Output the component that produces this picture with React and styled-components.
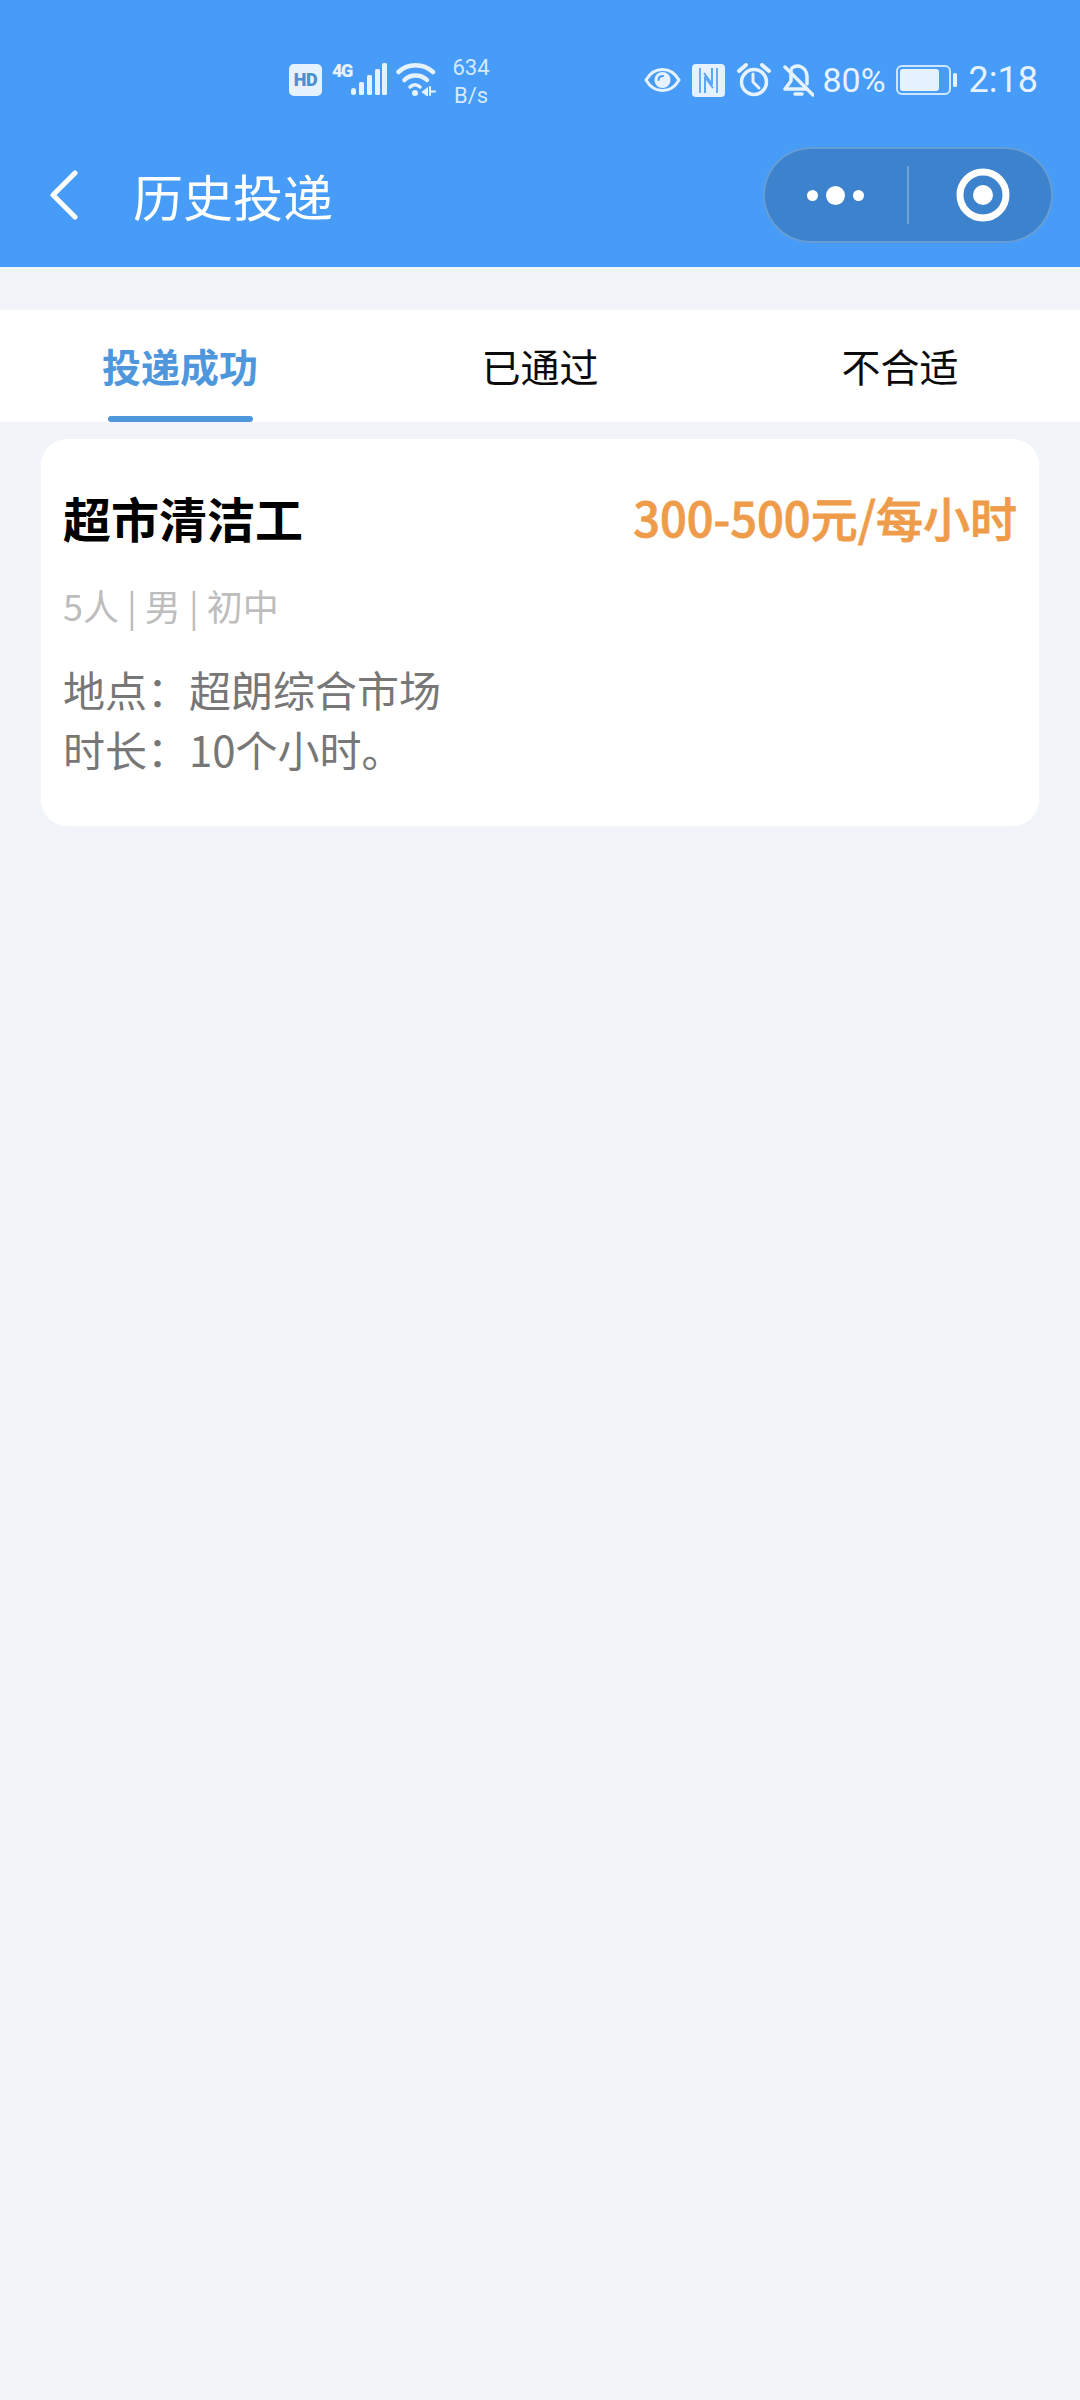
import React from "react";
import styled, { createGlobalStyle } from "styled-components";

const Global = createGlobalStyle`
  html, body { margin: 0; padding: 0; background: #f1f4f9; }
  * { box-sizing: border-box; }
`;
const CJK = `"Noto Sans CJK SC", "Noto Sans", sans-serif`;

const Page = styled.div`
  width: 1080px;
  min-height: 2400px;
  background: #f1f4f9;
  font-family: ${CJK};
`;
const Header = styled.header`
  height: 267px;
  background: #479cf8;
  display: flex;
  flex-direction: column;
`;
const StatusBar = styled.div`
  height: 147px;
  padding: 62px 42px 0 289px;
  display: flex;
  align-items: flex-start;
  color: #e6f2ff;
  font-family: Roboto, sans-serif;
`;
const HdBadge = styled.span`
  width: 33px;
  height: 32px;
  margin-top: 2px;
  border-radius: 5px;
  background: #e6f2ff;
  color: #4f8fd0;
  font-size: 18px;
  font-weight: 900;
  line-height: 32px;
  text-align: center;
  letter-spacing: -0.5px;
`;
const NetTag = styled.span`
  width: 19px;
  margin-left: 10px;
  margin-top: 0;
  font-size: 18px;
  font-weight: 900;
  line-height: 18px;
  letter-spacing: -1.5px;
`;
const Speed = styled.span`
  margin-left: 14px;
  margin-top: -8px;
  width: 42px;
  font-size: 22px;
  line-height: 28px;
  text-align: center;
  color: #d5e9ff;
`;
const StatusRight = styled.div`
  margin-left: auto;
  display: flex;
  align-items: center;
  height: 36px;
`;
const Glyph = styled.svg`
  display: block;
  flex: none;
  margin-left: ${(p) => p.$gap || 0}px;
  margin-top: ${(p) => p.$top || 0}px;
`;
const Pct = styled.span`
  margin-left: 8px;
  font-size: 34px;
  line-height: 36px;
`;
const Clock = styled.span`
  margin-left: 11px;
  font-size: 36px;
  line-height: 36px;
`;
const NavBar = styled.div`
  flex: 1;
  display: flex;
  align-items: center;
  padding: 0 27px 24px 50px;
`;
const NavTitle = styled.h1`
  margin: 0 0 0 55px;
  font-size: 50px;
  font-weight: 400;
  line-height: 72px;
  color: #fff;
`;
const Capsule = styled.div`
  margin-left: auto;
  width: 290px;
  height: 96px;
  border-radius: 48px;
  background: #3c82cc;
  border: 2px solid rgba(255, 255, 255, 0.22);
  display: flex;
  align-items: center;
`;
const CapsuleSide = styled.div`
  width: 143px;
  height: 100%;
  display: flex;
  align-items: center;
  justify-content: center;
  gap: 8px;
  padding-left: ${(p) => p.$pad || 0}px;
`;
const Dot = styled.span`
  width: ${(p) => p.$size}px;
  height: ${(p) => p.$size}px;
  border-radius: 50%;
  background: #fff;
`;
const Divider = styled.span`
  width: 2px;
  height: 58px;
  background: rgba(255, 255, 255, 0.25);
`;
const Tabs = styled.nav`
  margin-top: 43px;
  height: 112px;
  background: #fff;
  display: grid;
  grid-template-columns: repeat(3, 1fr);
`;
const Tab = styled.div`
  position: relative;
  display: flex;
  align-items: center;
  justify-content: center;
  padding-bottom: 2px;
  font-size: 39px;
  line-height: 58px;
  font-weight: ${(p) => (p.$active ? 700 : 400)};
  color: ${(p) => (p.$active ? "#4f97dd" : "#0a0a0a")};
  &::after {
    content: "";
    display: ${(p) => (p.$active ? "block" : "none")};
    position: absolute;
    left: 108px;
    bottom: 0;
    width: 145px;
    height: 6px;
    border-radius: 3px;
    background: #4f97dd;
  }
`;
const Card = styled.article`
  margin: 17px 41px 0;
  height: 387px;
  padding: 43px 22px 0;
  background: #fff;
  border-radius: 26px;
`;
const CardTop = styled.div`
  display: flex;
  justify-content: space-between;
  align-items: center;
  height: 70px;
`;
const JobTitle = styled.h2`
  margin: 0;
  font-size: 48px;
  font-weight: 700;
  line-height: 70px;
  color: #000;
`;
const Salary = styled.span`
  font-size: 47px;
  font-weight: 500;
  line-height: 70px;
  color: #ef9c4a;
  -webkit-text-stroke: 0.8px #ef9c4a;
`;
const Meta = styled.div`
  margin-top: 27px;
  font-size: 36px;
  line-height: 52px;
  color: #bdbdbd;
`;
const Info = styled.div`
  margin-top: 28px;
  font-size: 42px;
  line-height: 60px;
  color: #777;
`;

const Signal = () => (
  <Glyph width="36" height="34" viewBox="0 0 36 34">
    <rect x="0" y="26" width="5" height="7" rx="2.5" fill="#e6f2ff" />
    <rect x="8" y="20" width="5" height="13" rx="1.5" fill="#e6f2ff" />
    <rect x="16" y="13" width="5" height="20" rx="1.5" fill="#e6f2ff" />
    <rect x="24" y="7" width="5" height="26" rx="1.5" fill="#e6f2ff" />
    <rect x="31" y="1" width="5" height="32" rx="1.5" fill="#e6f2ff" />
  </Glyph>
);
const Wifi = () => (
  <Glyph width="40" height="34" viewBox="0 0 40 34" $gap={9} fill="none" stroke="#e6f2ff" strokeWidth="4.5" strokeLinecap="round">
    <path d="M2.5 10 C12 1 27 1 37 10" />
    <path d="M8.5 18 C14 12 25 12 31 18" />
    <path d="M14 25 C17 22 21 22 24 25" strokeWidth="3.5" />
    <circle cx="19" cy="31" r="3" fill="#e6f2ff" stroke="none" />
    <path d="M27 30 L31 27 V33 Z M34 25 V33 M34 29.5 L39 29.5" strokeWidth="2" fill="#e6f2ff" />
  </Glyph>
);
const Eye = () => (
  <Glyph width="37" height="26" viewBox="0 0 37 26" fill="none" stroke="#e6f2ff">
    <path d="M2 13 C10 -1 27 -1 35 13 C27 27 10 27 2 13 Z" strokeWidth="3" />
    <circle cx="18.5" cy="13" r="8" fill="#e6f2ff" stroke="none" />
    <path d="M14.5 13 C14.5 10.5 16.5 9 19 9" stroke="#479cf8" strokeWidth="2" strokeLinecap="round" />
  </Glyph>
);
const Nfc = () => (
  <Glyph width="33" height="33" viewBox="0 0 33 33" $gap={11} fill="none">
    <rect width="33" height="33" rx="4" fill="#e6f2ff" />
    <path d="M8 4 V29 M25 4 V29" stroke="#5ba6f7" strokeWidth="1.8" />
    <path d="M13 29 V13 L21 24 M20 4 V20 L12 9" stroke="#5ba6f7" strokeWidth="2" strokeLinejoin="round" />
  </Glyph>
);
const Alarm = () => (
  <Glyph width="34" height="34" viewBox="0 0 34 34" $gap={12} fill="none" stroke="#e6f2ff" strokeWidth="3.5" strokeLinecap="round">
    <circle cx="17" cy="19" r="12.5" />
    <path d="M16 11 V19 L22 25" strokeWidth="3" />
    <path d="M2 8 L9 2 M32 8 L25 2" strokeWidth="4" />
  </Glyph>
);
const BellOff = () => (
  <Glyph width="31" height="34" viewBox="0 0 31 34" $gap={12} fill="none" stroke="#e6f2ff" strokeWidth="3.5" strokeLinecap="round" strokeLinejoin="round">
    <path d="M8 7 V18 L2 26 H23" />
    <path d="M9 5 C14 1 23 3 24 13 V21" />
    <path d="M12 31 H19" />
    <path d="M2 4 L30 32" />
  </Glyph>
);
const Battery = () => (
  <Glyph width="62" height="30" viewBox="0 0 62 30" $gap={10}>
    <rect x="1" y="1" width="53" height="28" rx="5" fill="none" stroke="#cfe6ff" strokeWidth="2" />
    <rect x="4" y="4" width="39" height="22" rx="3" fill="#e6f2ff" />
    <rect x="57" y="8" width="4" height="14" rx="1.5" fill="#e6f2ff" />
  </Glyph>
);
const Back = () => (
  <Glyph width="28" height="50" viewBox="0 0 28 50" fill="none" stroke="#fff" strokeWidth="5" strokeLinecap="round" strokeLinejoin="round">
    <path d="M25 3 L3 25 L25 47" />
  </Glyph>
);
const Ring = () => (
  <Glyph width="54" height="54" viewBox="0 0 54 54">
    <circle cx="27" cy="27" r="23" fill="none" stroke="#fff" strokeWidth="7" />
    <circle cx="27" cy="27" r="10" fill="#fff" />
  </Glyph>
);

export default function App() {
  return (
    <Page>
      <Global />
      <Header>
        <StatusBar>
          <HdBadge>HD</HdBadge>
          <NetTag>4G</NetTag>
          <Signal />
          <Wifi />
          <Speed>634<br />B/s</Speed>
          <StatusRight>
            <Eye />
            <Nfc />
            <Alarm />
            <BellOff />
            <Pct>80%</Pct>
            <Battery />
            <Clock>2:18</Clock>
          </StatusRight>
        </StatusBar>
        <NavBar>
          <Back />
          <NavTitle>历史投递</NavTitle>
          <Capsule>
            <CapsuleSide>
              <Dot $size={11} />
              <Dot $size={19} />
              <Dot $size={11} />
            </CapsuleSide>
            <Divider />
            <CapsuleSide $pad={6}>
              <Ring />
            </CapsuleSide>
          </Capsule>
        </NavBar>
      </Header>
      <Tabs>
        <Tab $active>投递成功</Tab>
        <Tab>已通过</Tab>
        <Tab>不合适</Tab>
      </Tabs>
      <Card>
        <CardTop>
          <JobTitle>超市清洁工</JobTitle>
          <Salary>300-500元/每小时</Salary>
        </CardTop>
        <Meta>5人 | 男 | 初中</Meta>
        <Info>
          地点：超朗综合市场
          <br />
          时长：10个小时。
        </Info>
      </Card>
    </Page>
  );
}
